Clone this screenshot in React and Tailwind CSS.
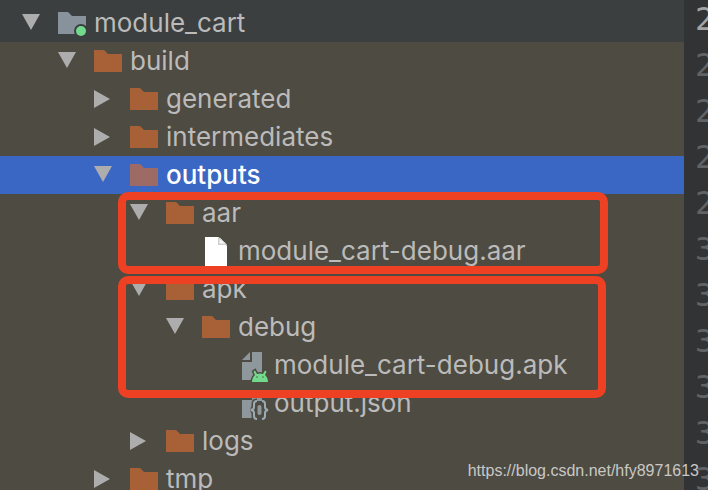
import { useState } from 'react';

const indents = ['pl-[22px]', 'pl-[58px]', 'pl-[94px]', 'pl-[130px]', 'pl-[166px]', 'pl-[202px]'];

const rows = [
  { name: 'module_cart', depth: 0, icon: 'module', arrow: 'open' },
  { name: 'build', depth: 1, icon: 'folder', arrow: 'open' },
  { name: 'generated', depth: 2, icon: 'folder', arrow: 'closed' },
  { name: 'intermediates', depth: 2, icon: 'folder', arrow: 'closed' },
  { name: 'outputs', depth: 2, icon: 'folder', arrow: 'open' },
  { name: 'aar', depth: 3, icon: 'folder', arrow: 'open' },
  { name: 'module_cart-debug.aar', depth: 4, icon: 'file' },
  { name: 'apk', depth: 3, icon: 'folder', arrow: 'open' },
  { name: 'debug', depth: 4, icon: 'folder', arrow: 'open' },
  { name: 'module_cart-debug.apk', depth: 5, icon: 'apk' },
  { name: 'output.json', depth: 5, icon: 'json' },
  { name: 'logs', depth: 3, icon: 'folder', arrow: 'closed' },
  { name: 'tmp', depth: 2, icon: 'folder', arrow: 'closed' },
];

const lineNumbers = [2, 2, 2, 2, 2, 3, 3, 3, 3, 3, 3];

const braces =
  'M19 15q-3 0-3 3v3q0 2.500-3 3 3 .5 3 3v3q0 3 3 3M24 15q3 0 3 3v3q0 2.500 3 3-3 .5-3 3v3q0 3-3 3';

function Arrow({ open }) {
  return (
    <svg width="18" height="18" viewBox="0 0 18 18" fill="#adadad">
      {open ? <path d="M0 0h18L9 16z" /> : <path d="M0 0v18l16-9z" />}
    </svg>
  );
}

function Icon({ type, selected }) {
  if (type === 'module') {
    return (
      <svg width="28" height="28" viewBox="0 0 28 28" className="overflow-visible">
        <path d="M0 3h9q2 0 3 2l2 2h14v18H0z" fill="#87929c" />
        <circle cx="23" cy="22" r="7" fill="#3b3f40" />
        <circle cx="23" cy="22" r="5" fill="#73d98c" />
      </svg>
    );
  }
  if (type === 'file') {
    return (
      <svg width="28" height="34" viewBox="0 0 28 34">
        <path d="M3 3h13q3 1 5 4 4 3 4 6v21H3z" fill="#fff" />
        <path d="M16 3v8h9q-1-2-4-4-2-3-5-4z" fill="#cfcfcf" />
        <path d="M17.500 5v4.500H23z" fill="#f8f8f8" />
      </svg>
    );
  }
  if (type === 'apk') {
    return (
      <svg width="32" height="34" viewBox="0 0 32 34" className="-mr-1">
        <path d="M12 4v8H4z" fill="#8e979c" />
        <path d="M14 4h10v28H4V14h10z" fill="#8e979c" />
        <path
          d="M14 34c0-3.500 1.500-5.500 3-7L15.500 23.500l1.500-1 2 3.500q3-1 6 0l2-3.500 1.500 1L27 27c1.500 1.500 3 3.500 3 7z"
          fill="#73d98c"
          stroke="#4e4b42"
          strokeWidth="3"
          paintOrder="stroke"
        />
        <circle cx="19" cy="29" r=".7" fill="#4e4b42" />
        <circle cx="25" cy="29" r=".7" fill="#4e4b42" />
      </svg>
    );
  }
  if (type === 'json') {
    return (
      <svg width="32" height="34" viewBox="0 0 32 34" className="-mr-1">
        <path d="M12 4v8H4zM14 4h10v28H4V14h10z" fill="#8e979c" />
        <path d="M19 15h5q3 0 3 3v12q0 3-3 3h-5q-3 0-3-3V18q0-3 3-3z" fill="#4e4b42" />
        <path d={braces} fill="none" stroke="#4e4b42" strokeWidth="5" />
        <path d={braces} fill="none" stroke="#9aabb5" strokeWidth="2" />
        <rect x="19.500" y="19" width="4" height="10" rx="2" fill="#8e979c" />
      </svg>
    );
  }
  return (
    <svg width="28" height="22" viewBox="0 0 28 22" fill={selected ? '#9e6a66' : '#a86037'}>
      <path d="M0 0h9q2 0 3 2l2 2h14v18H0z" />
    </svg>
  );
}

function TreeRow({ row, selected, onSelect }) {
  return (
    <li
      onClick={onSelect}
      className={`flex h-[38px] shrink-0 items-center ${indents[row.depth]} ${
        selected ? 'bg-[#3a67c4] font-medium text-white' : 'text-[#bbbbbb]'
      }`}
    >
      {row.arrow ? (
        <button className="mr-[18px] w-[18px] shrink-0" aria-label={`Toggle ${row.name}`}>
          <Arrow open={row.arrow === 'open'} />
        </button>
      ) : (
        <span className="w-9 shrink-0" />
      )}
      <span className="mr-2 w-7 shrink-0">
        <Icon type={row.icon} selected={selected} />
      </span>
      <span className="whitespace-nowrap text-[26px] leading-[38px]">{row.name}</span>
    </li>
  );
}

export default function App() {
  const [selected, setSelected] = useState('outputs');
  const [root, ...children] = rows;

  return (
    <div className="relative flex h-screen overflow-hidden bg-[#4e4b42] font-['Inter',sans-serif]">
      <main className="relative min-w-0 flex-1">
        <ul className="bg-[#3b3f40] pt-1">
          <TreeRow row={root} selected={selected === root.name} onSelect={() => setSelected(root.name)} />
        </ul>
        <ul>
          {children.map((row) => (
            <TreeRow
              key={row.name}
              row={row}
              selected={selected === row.name}
              onSelect={() => setSelected(row.name)}
            />
          ))}
        </ul>
        <div className="pointer-events-none absolute left-[118px] top-[192px] h-[82px] w-[490px] rounded-[10px] border-8 border-[#ee4023]" />
        <div className="pointer-events-none absolute left-[118px] top-[276px] h-[122px] w-[488px] rounded-[10px] border-8 border-[#ee4023]" />
      </main>

      <aside className="w-6 shrink-0 overflow-hidden bg-[#313335] pl-[11px] font-['DejaVu_Sans_Mono',monospace] text-[32px] leading-[46px] text-[#606366]">
        {lineNumbers.map((number, i) => (
          <div key={i} className={i === 0 ? '-mt-1 text-[#a4a3a3]' : ''}>
            {number}
          </div>
        ))}
      </aside>

      <p className="absolute bottom-[7px] right-[9px] font-['Liberation_Sans',sans-serif] text-base text-[#c8c8c6]">
        https://blog.csdn.net/hfy8971613
      </p>
    </div>
  );
}
